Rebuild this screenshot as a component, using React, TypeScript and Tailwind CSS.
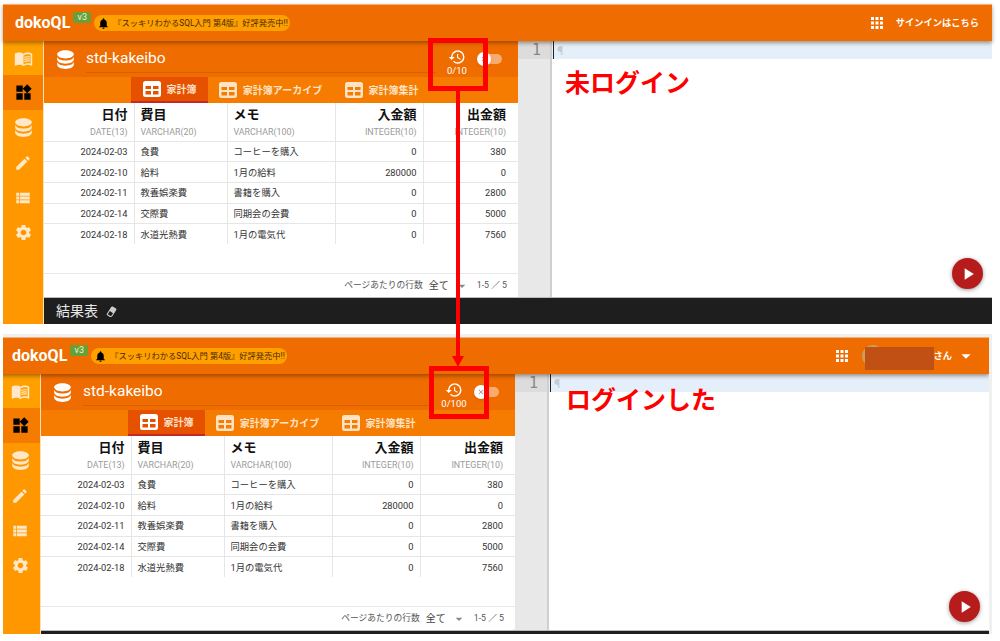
import { MdApps, MdArrowDropDown, MdClose, MdHistory, MdNotifications, MdPlayArrow, MdSettings, MdWidgets } from 'react-icons/md';

const bookPath =
  'M12 21.5C10.65 20.65 8.2 20 6.5 20C4.85 20 3.15 20.3 1.75 21.05C1.65 21.1 1.6 21.1 1.5 21.1C1.25 21.1 1 20.85 1 20.6V6C1.6 5.55 2.25 5.25 3 5C4.11 4.65 5.33 4.5 6.5 4.5C8.45 4.5 10.55 4.9 12 6C13.45 4.9 15.55 4.5 17.5 4.5C18.67 4.5 19.89 4.65 21 5C21.75 5.25 22.4 5.55 23 6V20.6C23 20.85 22.75 21.1 22.5 21.1C22.4 21.1 22.35 21.1 22.25 21.05C20.85 20.3 19.15 20 17.5 20C15.8 20 13.35 20.65 12 21.5M12 8V19.5C13.35 18.65 15.8 18 17.5 18C18.7 18 19.9 18.15 21 18.5V7C19.9 6.65 18.7 6.5 17.5 6.5C15.8 6.5 13.35 7.15 12 8M13 11.5C14.11 10.82 15.6 10.5 17.5 10.5C18.41 10.5 19.2 10.56 20 10.76V9.23C19.13 9.08 18.3 9 17.5 9C15.71 9 14.22 9.28 13 9.84V11.5M17.5 11.67C15.79 11.67 14.29 11.93 13 12.46V14.15C14.11 13.5 15.6 13.15 17.5 13.15C18.54 13.15 19.38 13.24 20 13.36V11.9C19.13 11.74 18.3 11.67 17.5 11.67M20 14.57C19.13 14.41 18.3 14.33 17.5 14.33C15.67 14.33 14.17 14.62 13 15.19V16.86C14.11 16.16 15.6 15.83 17.5 15.83C18.54 15.83 19.38 15.91 20 16.03V14.57Z';
const dbPath =
  'M12,3C7.58,3 4,4.79 4,7C4,9.21 7.58,11 12,11C16.42,11 20,9.21 20,7C20,4.79 16.42,3 12,3M4,9V12C4,14.21 7.58,16 12,16C16.42,16 20,14.21 20,12V9C20,11.21 16.42,13 12,13C7.58,13 4,11.21 4,9M4,14V17C4,19.21 7.58,21 12,21C16.42,21 20,19.21 20,17V14C20,16.21 16.42,18 12,18C7.58,18 4,16.21 4,14Z';
const pencilPath =
  'M20.71,7.04C21.1,6.65 21.1,6 20.71,5.63L18.37,3.29C18,2.9 17.35,2.9 16.96,3.29L15.12,5.12L18.87,8.87M3,17.25V21H6.75L17.81,9.93L14.06,6.18L3,17.25Z';
const eraserPath =
  'M16.24,3.56L21.19,8.5C21.97,9.29 21.97,10.55 21.19,11.34L12,20.53C10.44,22.09 7.91,22.09 6.34,20.53L2.81,17C2.03,16.21 2.03,14.95 2.81,14.16L13.41,3.56C14.2,2.78 15.46,2.78 16.24,3.56M4.22,15.58L7.76,19.11C8.54,19.9 9.8,19.9 10.59,19.11L14.12,15.58L9.17,10.63L4.22,15.58Z';
const listPath = 'M3 5h4v4H3zM8 5h13v4H8zM3 10h4v4H3zM8 10h13v4H8zM3 15h4v4H3zM8 15h13v4H8z';

const Mdi = ({ d, className }: { d: string; className: string }) => (
  <svg viewBox="0 0 24 24" fill="currentColor" className={className}>
    <path d={d} />
  </svg>
);

const TableIcon = () => (
  <svg viewBox="0 0 18 16" className="w-[18px] h-[16px] shrink-0" fill="currentColor">
    <path
      fillRule="evenodd"
      d="M2.5 0h13A2.5 2.5 0 0 1 18 2.500v11a2.500 2.500 0 0 1-2.500 2.500h-13A2.500 2.500 0 0 1 0 13.500v-11A2.500 2.500 0 0 1 2.500 0zM2.500 5v3h5.500V5zM10 5v3h5.500V5zM2.500 10v3.500h5.500V10zM10 10v3.500h5.500V10z"
    />
  </svg>
);

const rows = [
  ['2024-02-03', '食費', 'コーヒーを購入', '0', '380'],
  ['2024-02-10', '給料', '1月の給料', '280000', '0'],
  ['2024-02-11', '教養娯楽費', '書籍を購入', '0', '2800'],
  ['2024-02-14', '交際費', '同期会の会費', '0', '5000'],
  ['2024-02-18', '水道光熱費', '1月の電気代', '0', '7560'],
];

const columns = [
  { name: '日付', type: 'DATE(13)', right: true, width: 'w-[90px]' },
  { name: '費目', type: 'VARCHAR(20)', right: false, width: 'w-[93px]' },
  { name: 'メモ', type: 'VARCHAR(100)', right: false, width: 'w-[108px]' },
  { name: '入金額', type: 'INTEGER(10)', right: true, width: 'w-[88px]' },
  { name: '出金額', type: 'INTEGER(10)', right: true, width: 'w-[95px]' },
];

const Sidebar = () => (
  <div className="w-[41px] shrink-0 bg-[#ff9800] border-r border-[#ffe0b2] flex flex-col text-[#ffe8c8]">
    <div className="h-[34px] bg-[#ffa000] flex items-center justify-center">
      <Mdi d={bookPath} className="w-[19px] h-[19px]" />
    </div>
    <div className="h-[35px] bg-[#f57c00] flex items-center justify-center text-black">
      <MdWidgets className="w-[19px] h-[19px]" />
    </div>
    <div className="h-[35px] flex items-center justify-center">
      <Mdi d={dbPath} className="w-[25px] h-[25px]" />
    </div>
    <div className="h-[35px] flex items-center justify-center">
      <Mdi d={pencilPath} className="w-[18px] h-[18px]" />
    </div>
    <div className="h-[35px] flex items-center justify-center">
      <Mdi d={listPath} className="w-[18px] h-[18px]" />
    </div>
    <div className="h-[34px] flex items-center justify-center">
      <MdSettings className="w-[19px] h-[19px]" />
    </div>
  </div>
);

const DataTable = () => (
  <table className="table-fixed border-collapse w-[474px] text-[#333]">
    <thead>
      <tr className="h-[38px] border-b border-[#e6e6e6]">
        {columns.map((c, i) => (
          <th
            key={c.name}
            className={`${c.width} p-0 px-[6px] align-top pt-[4px] font-normal ${c.right ? 'text-right' : 'text-left'} ${i < 4 ? 'border-r border-[#e6e6e6]' : ''} ${i === 4 ? 'pr-[12px]' : ''}`}
          >
            <div className="text-[13px] leading-[16px] font-bold text-[#111]">{c.name}</div>
            <div className="text-[8.900px] leading-[12px] mt-[3px] text-[#9a9a9a] whitespace-nowrap">{c.type}</div>
          </th>
        ))}
      </tr>
    </thead>
    <tbody>
      {rows.map((r, ri) => (
        <tr key={r[0]} className={`h-[20.700px] ${ri < 4 ? 'border-b border-[#e6e6e6]' : ''}`}>
          {r.map((v, i) => (
            <td
              key={i}
              className={`p-0 px-[6px] pt-[1px] text-[9.300px] leading-[12px] whitespace-nowrap ${columns[i].right ? 'text-right' : 'text-left'} ${i < 4 ? 'border-r border-[#e6e6e6]' : ''} ${i === 4 ? 'pr-[12px]' : ''}`}
            >
              {v}
            </td>
          ))}
        </tr>
      ))}
    </tbody>
  </table>
);

const Screen = ({ loggedIn, limit }: { loggedIn: boolean; limit: string }) => (
  <div className="flex flex-col shrink-0 w-[989px] h-[320px]">
    <div className="relative z-10 h-[37px] shrink-0 bg-[#ef6c00] border-t border-[#f0b080] shadow-[0_2px_4px_rgba(60,30,0,0.45)] flex items-center text-white pl-[12px]">
      <span className="text-[16px] font-bold leading-none">dokoQL</span>
      <span className="ml-[3px] -mt-[12px] h-[11px] w-[18px] rounded-[2px] bg-[#689f38] text-[9px] leading-[11px] text-center text-[#e8f5d8]">v3</span>
      <div className="ml-[3px] h-[16px] w-[196px] rounded-full bg-[#ffa000] flex items-center pl-[3px] text-[#4a2a00] text-[8.250px] leading-none whitespace-nowrap">
        <MdNotifications className="w-[13px] h-[13px] text-black shrink-0 mr-[3px]" />
        <span>『スッキリわかるSQL入門 第4版』好評発売中!!</span>
      </div>
      <div className="flex-1" />
      {loggedIn ? (
        <div className="flex items-center">
          <MdApps className="w-[18px] h-[18px]" />
          <div className="relative ml-[11px] w-[22px] h-[22px] rounded-full bg-[#c9a05a]">
            <div className="absolute left-[3px] top-[2px] w-[69px] h-[23px] bg-[#c05014]" />
          </div>
          <span className="ml-[50px] text-[9.250px] font-bold">さん</span>
          <MdArrowDropDown className="ml-[3px] mr-[12px] w-[22px] h-[22px]" />
        </div>
      ) : (
        <div className="flex items-center">
          <MdApps className="w-[18px] h-[18px]" />
          <span className="ml-[10px] mr-[13px] text-[9.250px] font-bold">サインインはこちら</span>
        </div>
      )}
    </div>
    <div className="flex flex-1 min-h-0">
      <Sidebar />
      <div className="flex-1 min-w-0 flex flex-col">
        <div className="flex flex-1 min-h-0">
          <div className="w-[474px] shrink-0 flex flex-col">
            <div className="h-[36px] shrink-0 bg-[#ef6c00] flex items-center text-white pl-[9px]">
              <Mdi d={dbPath} className="w-[25px] h-[25px] shrink-0" />
              <div className="ml-[8px] w-[350px] h-[26px] shrink-0 flex items-center border-b border-[#d85f00] text-[15.500px] mt-[1px]">std-kakeibo</div>
              <div className="ml-[4px] w-[34px] shrink-0 flex flex-col items-center text-white mt-[6px]">
                <MdHistory className="w-[18px] h-[18px]" />
                <span className="text-[9.500px] leading-[10px] whitespace-nowrap">0/{limit}</span>
              </div>
              <div className="relative ml-[6px] w-[22px] h-[10px] shrink-0 rounded-full bg-[#f7ab6f]">
                <div className="absolute -left-[3px] -top-[2px] w-[14px] h-[14px] rounded-full bg-white flex items-center justify-center text-[#888] shadow">
                  <MdClose className="w-[8px] h-[8px]" />
                </div>
              </div>
            </div>
            <div className="h-[26px] shrink-0 bg-[#f57c00] flex pl-[87px] text-[10px] font-bold text-white">
              <div className="w-[77px] bg-[#e65100] border-b-2 border-[#c62828] flex items-center justify-center gap-[6px]">
                <TableIcon />
                <span className="text-[#ffe0c8]">家計簿</span>
              </div>
              <div className="w-[125px] flex items-center justify-center gap-[6px] text-[#ffe3c4]">
                <TableIcon />
                <span>家計簿アーカイブ</span>
              </div>
              <div className="w-[97px] flex items-center justify-center gap-[6px] text-[#ffe3c4]">
                <TableIcon />
                <span>家計簿集計</span>
              </div>
            </div>
            <div className="flex-1 min-h-0 bg-white flex flex-col rounded-br-[4px]">
              <div className="flex-1 min-h-0">
                <DataTable />
              </div>
              <div className="h-[24px] shrink-0 border-t border-[#e8e8e8] flex items-center justify-end text-[#555] text-[8.750px] pr-[11px] whitespace-nowrap">
                <span>ページあたりの行数</span>
                <span className="ml-[6px] text-[10px] text-[#444]">全て</span>
                <MdArrowDropDown className="ml-[5px] w-[16px] h-[16px] text-[#888]" />
                <span className="ml-[7px]">1-5 ／ 5</span>
              </div>
            </div>
          </div>
          <div className="relative flex-1 min-w-0 flex bg-white">
            <div className="w-[34px] shrink-0 bg-[#e8e8e8] border-r-2 border-[#cfcfcf]">
              <div className="h-[18px] bg-[#dcdcdc] text-right pr-[9px] text-[15px] leading-[18px] text-[#888] font-['DejaVu_Sans_Mono',monospace]">1</div>
            </div>
            <div className="flex-1 min-w-0">
              <div className="h-[18px] bg-[#e5effa] flex items-center">
                <div className="ml-[1px] w-[1px] h-[18px] bg-[#222]" />
                <span className="ml-[3px] text-[13px] leading-none text-[#c8ccd0]">¶</span>
              </div>
            </div>
            <div className="absolute right-[9px] bottom-[8px] w-[31px] h-[31px] rounded-full bg-[#b71c1c] shadow-[0_1px_4px_rgba(0,0,0,0.4)] flex items-center justify-center text-white">
              <MdPlayArrow className="w-[20px] h-[20px]" />
            </div>
          </div>
        </div>
        <div className="h-[27px] shrink-0 bg-[#1e1e1e] border-t border-[#bbb] flex items-center text-[#e8e8e8] pl-[12px]">
          {/* the lower capture stops before this label */}
          {!loggedIn && (
            <>
              <span className="text-[14px]">結果表</span>
              <Mdi d={eraserPath} className="ml-[7px] w-[13px] h-[13px] text-[#ccc] -rotate-12" />
            </>
          )}
        </div>
      </div>
    </div>
  </div>
);

const App = () => (
  <div className="relative w-[1000px] h-[641px] overflow-hidden bg-white font-['Roboto','Noto_Sans_CJK_JP',sans-serif]">
    <div className="pl-[3px] pt-[4px] flex flex-col">
      <Screen loggedIn={false} limit="10" />
      <div className="mt-[10px] w-[989px] h-[300px] pt-[3px] bg-[#f0f0f0]">
        {/* second capture is cropped 3px on its left edge and ends at y=634 */}
        <div className="w-[986px] h-[297px] overflow-hidden">
          <div className="-ml-[3px]">
            <Screen loggedIn limit="100" />
          </div>
        </div>
      </div>
    </div>

    {/* red annotations drawn over the screenshots */}
    <div className="absolute z-20 left-[428px] top-[38px] w-[60px] h-[53px] border-[5px] border-[#ff0000]" />
    <div className="absolute z-20 left-[429px] top-[366px] w-[60px] h-[53px] border-[5px] border-[#ff0000]" />
    <div className="absolute z-20 left-[456px] top-[90px] w-[4px] h-[268px] bg-[#ff0000]" />
    <div className="absolute z-20 left-[452px] top-[356px] w-0 h-0 border-l-[6px] border-r-[6px] border-t-[11px] border-l-transparent border-r-transparent border-t-[#ff0000]" />
    <div className="absolute z-20 left-[565px] top-[64px] text-[25px] leading-[34px] font-bold text-[#ff0000] font-['Noto_Sans_CJK_JP',sans-serif]">未ログイン</div>
    <div className="absolute z-20 left-[566px] top-[381px] text-[25px] leading-[34px] font-bold text-[#ff0000] font-['Noto_Sans_CJK_JP',sans-serif]">ログインした</div>
  </div>
);

export default App;
